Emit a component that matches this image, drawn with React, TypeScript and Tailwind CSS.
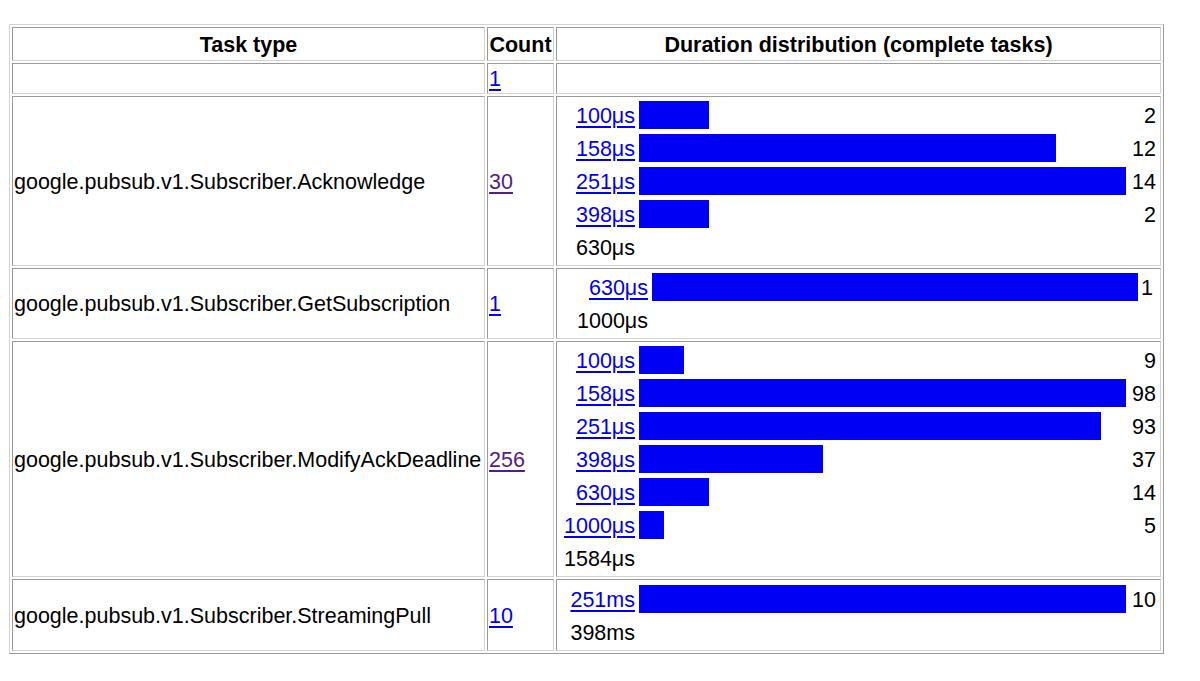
import React from "react";

type Dist = {
  labelW: number;
  countPr: number;
  barMax: number;
  buckets: [string, number][];
  last: string;
};

type Row = {
  name: string;
  count: string;
  visited: boolean;
  dist: Dist | null;
};

const rows: Row[] = [
  { name: "", count: "1", visited: false, dist: null },
  {
    name: "google.pubsub.v1.Subscriber.Acknowledge",
    count: "30",
    visited: true,
    dist: {
      labelW: 78,
      countPr: 4,
      barMax: 487,
      buckets: [
        ["100μs", 2],
        ["158μs", 12],
        ["251μs", 14],
        ["398μs", 2],
      ],
      last: "630μs",
    },
  },
  {
    name: "google.pubsub.v1.Subscriber.GetSubscription",
    count: "1",
    visited: false,
    dist: {
      labelW: 91,
      countPr: 7,
      barMax: 486,
      buckets: [["630μs", 1]],
      last: "1000μs",
    },
  },
  {
    name: "google.pubsub.v1.Subscriber.ModifyAckDeadline",
    count: "256",
    visited: true,
    dist: {
      labelW: 78,
      countPr: 4,
      barMax: 487,
      buckets: [
        ["100μs", 9],
        ["158μs", 98],
        ["251μs", 93],
        ["398μs", 37],
        ["630μs", 14],
        ["1000μs", 5],
      ],
      last: "1584μs",
    },
  },
  {
    name: "google.pubsub.v1.Subscriber.StreamingPull",
    count: "10",
    visited: false,
    dist: {
      labelW: 78,
      countPr: 4,
      barMax: 487,
      buckets: [["251ms", 10]],
      last: "398ms",
    },
  },
];

const cell =
  "border border-t-[#9a9a9a] border-l-[#9a9a9a] border-b-[#d2d2d2] border-r-[#d2d2d2]";

function Distribution({ d }: { d: Dist }) {
  const max = Math.max(...d.buckets.map((b) => b[1]));
  return (
    <div
      className="grid w-full"
      style={{ gridTemplateColumns: `${d.labelW}px 4px ${d.barMax}px 1fr` }}
    >
      {d.buckets.map(([label, n]) => (
        <React.Fragment key={label}>
          <div className="h-[33px] flex items-center justify-end pt-[3px]">
            <a href="#" className="text-[#0000ee] underline underline-offset-[3px]">
              {label}
            </a>
          </div>
          <div />
          <div className="h-[33px] flex items-center">
            <div
              className="h-[28px] bg-[#0000f5]"
              style={{ width: Math.round((d.barMax * n) / max) }}
            />
          </div>
          <div
            className="h-[33px] flex items-center justify-end pt-[3px]"
            style={{ paddingRight: d.countPr }}
          >
            {n}
          </div>
        </React.Fragment>
      ))}
      <div className="h-[33px] flex items-center justify-end pt-[3px]">{d.last}</div>
    </div>
  );
}

export default function App() {
  return (
    <div
      className="bg-white text-black min-h-[681px] pt-[24px] pl-[9px]"
      style={{ fontFamily: '"Liberation Sans", Arial, sans-serif' }}
    >
      <div className="w-[1155px] border border-t-[#d2d2d2] border-l-[#d2d2d2] border-b-[#9a9a9a] border-r-[#9a9a9a] p-[2px] text-[21.5px]">
        <div className="grid grid-cols-[473px_67px_605px] grid-rows-[34px_31px_170px_71px_236px_72px] gap-[2px]">
          <div className={`${cell} flex items-center justify-center font-bold pt-[2px]`}>
            Task type
          </div>
          <div className={`${cell} flex items-center justify-center font-bold pt-[2px]`}>
            Count
          </div>
          <div className={`${cell} flex items-center justify-center font-bold pt-[2px]`}>
            Duration distribution (complete tasks)
          </div>
          {rows.map((r, i) => (
            <React.Fragment key={i}>
              <div className={`${cell} flex items-center pl-[1px] pt-[2px] whitespace-nowrap`}>
                {r.name}
              </div>
              <div className={`${cell} flex items-center pl-[1px] pt-[2px]`}>
                <a
                  href="#"
                  className={
                    r.visited
                      ? "text-[#551a8b] underline underline-offset-[3px]"
                      : "text-[#0000ee] underline underline-offset-[3px]"
                  }
                >
                  {r.count}
                </a>
              </div>
              <div className={`${cell} flex items-center`}>
                {r.dist ? <Distribution d={r.dist} /> : null}
              </div>
            </React.Fragment>
          ))}
        </div>
      </div>
    </div>
  );
}
